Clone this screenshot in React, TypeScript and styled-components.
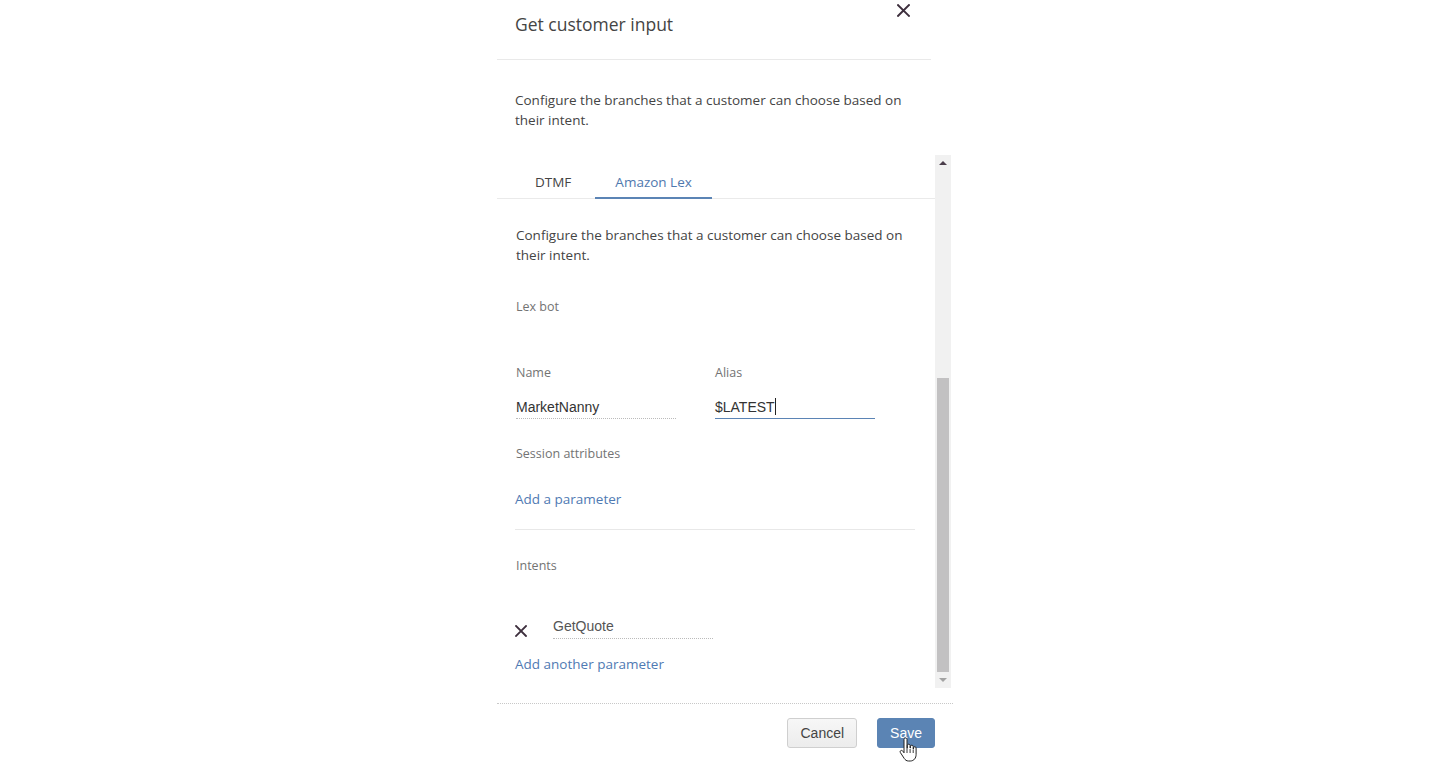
import React from "react";
import styled, { createGlobalStyle } from "styled-components";

const Global = createGlobalStyle`
  html, body { margin: 0; padding: 0; background: #fff; }
  body { font-family: "Open Sans", "Noto Sans", sans-serif; color: #444; }
  * { box-sizing: border-box; }
`;

const Page = styled.div`
  width: 1450px;
  height: 766px;
  display: flex;
  justify-content: center;
  overflow: hidden;
`;

const Dialog = styled.div`
  width: 456px;
  display: flex;
  flex-direction: column;
`;

const Header = styled.div`
  height: 60px;
  margin-right: 22px;
  padding: 12px 20px 0 18px;
  border-bottom: 1px solid #e9e9e9;
  display: flex;
  justify-content: space-between;
  align-items: flex-start;
`;

const Title = styled.h1`
  margin: 0;
  font-size: 17.5px;
  font-weight: 400;
  color: #444;
  line-height: 24px;
`;

const CloseBtn = styled.button`
  border: 0;
  background: none;
  padding: 0;
  margin-top: -8px;
  width: 14px;
  height: 14px;
  display: flex;
  color: #3d2f3d;
`;

const Para = styled.p<{ $indent?: number }>`
  margin: 0;
  padding-left: ${(p) => p.$indent ?? 18}px;
  font-size: 13.5px;
  line-height: 20px;
  color: #444;
`;

const Intro = styled.div`
  padding-top: 30px;
  height: 95px;
`;

const ScrollArea = styled.div`
  height: 533px;
  width: 456px;
  display: flex;
`;

const ScrollContent = styled.div`
  flex: 1;
  display: flex;
  flex-direction: column;
`;

const TabBar = styled.div`
  height: 44px;
  display: flex;
  align-items: stretch;
  padding-left: 18px;
  gap: 4px;
  border-bottom: 1px solid #eaeaea;
`;

const Tab = styled.div<{ $active?: boolean }>`
  padding: 12px 20px 0;
  display: flex;
  align-items: center;
  font-size: 13.5px;
  color: ${(p) => (p.$active ? "#4f78ae" : "#444")};
  border-bottom: 2px solid ${(p) => (p.$active ? "#5b84b5" : "transparent")};
  margin-bottom: -1px;
`;

const Body = styled.div`
  padding: 26px 20px 0 19px;
  display: flex;
  flex-direction: column;
`;

const Label = styled.div<{ $mt: number }>`
  margin-top: ${(p) => p.$mt}px;
  font-size: 12.5px;
  line-height: 18px;
  color: #737373;
`;

const FieldRow = styled.div`
  display: flex;
  gap: 39px;
  margin-top: 48px;
`;

const Field = styled.div`
  width: 160px;
  display: flex;
  flex-direction: column;
`;

const Input = styled.div<{ $focus?: boolean }>`
  margin-top: 14px;
  height: 23px;
  font-family: "Liberation Sans", Arial, sans-serif;
  font-size: 14px;
  line-height: 22px;
  color: #333;
  border-bottom: 1px ${(p) => (p.$focus ? "solid #5b84b5" : "dotted #bbb")};
`;

const Caret = styled.span`
  display: inline-block;
  width: 1px;
  height: 17px;
  background: #222;
  vertical-align: -3px;
`;

const Link = styled.a<{ $mt: number }>`
  margin-top: ${(p) => p.$mt}px;
  margin-left: -1px;
  font-size: 13.5px;
  line-height: 20px;
  color: #4f7ab3;
  text-decoration: none;
  cursor: pointer;
  align-self: flex-start;
`;

const Divider = styled.hr`
  margin: 20px 0 0 -1px;
  width: 400px;
  border: 0;
  border-top: 1px solid #e8e8e8;
`;

const IntentRow = styled.div`
  display: flex;
  align-items: flex-end;
  margin-top: 40px;
  margin-left: -1px;
  gap: 26px;
`;

const RemoveBtn = styled.button`
  border: 0;
  background: none;
  padding: 0;
  width: 12px;
  height: 12px;
  display: flex;
  color: #3d2f3d;
  margin-bottom: 2px;
`;

const IntentInput = styled(Input)`
  margin-top: 0;
  width: 160px;
  height: 24px;
  color: #555;
`;

const Scrollbar = styled.div`
  width: 17px;
  margin-right: 2px;
  background: #f1f1f1;
  display: flex;
  flex-direction: column;
  align-items: center;
`;

const ScrollArrow = styled.div<{ $down?: boolean }>`
  height: 16px;
  display: flex;
  align-items: center;
  justify-content: center;
  &::after {
    content: "";
    border-left: 4px solid transparent;
    border-right: 4px solid transparent;
    ${(p) =>
      p.$down
        ? "border-top: 4px solid #a3a3a3;"
        : "border-bottom: 4px solid #4a3d4a;"}
  }
`;

const Track = styled.div`
  flex: 1;
  width: 100%;
  display: flex;
  flex-direction: column;
  justify-content: flex-end;
  padding: 0 2px;
`;

const Thumb = styled.div`
  height: 294px;
  background: #c2c1c2;
`;

const Footer = styled.div`
  margin-top: 15px;
  border-top: 1px dotted #c8c8c8;
  padding: 14px 18px 0 0;
  display: flex;
  justify-content: flex-end;
  gap: 20px;
`;

const Button = styled.button<{ $primary?: boolean }>`
  position: relative;
  height: 30px;
  padding: 0 12px;
  border-radius: 3px;
  font-family: "Liberation Sans", Arial, sans-serif;
  font-size: 14px;
  color: ${(p) => (p.$primary ? "#fff" : "#444")};
  background: ${(p) => (p.$primary ? "#5b84b4" : "linear-gradient(#f7f7f7, #ececec)")};
  border: 1px solid ${(p) => (p.$primary ? "#5b84b4" : "#cfcfcf")};
`;

const Cursor = styled.svg`
  position: absolute;
  left: 21px;
  top: 18px;
`;

const XIcon = ({ size }: { size: number }) => (
  <svg width={size} height={size} viewBox="0 0 12 12">
    <path d="M1 1 L11 11 M11 1 L1 11" stroke="currentColor" strokeWidth="1.8" strokeLinecap="square" />
  </svg>
);

export default function App() {
  return (
    <Page>
      <Global />
      <Dialog>
        <Header>
          <Title>Get customer input</Title>
          <CloseBtn aria-label="Close">
            <XIcon size={13} />
          </CloseBtn>
        </Header>
        <Intro>
          <Para>
            Configure the branches that a customer can choose based on
            <br />
            their intent.
          </Para>
        </Intro>
        <ScrollArea>
          <ScrollContent>
            <TabBar>
              <Tab>DTMF</Tab>
              <Tab $active>Amazon Lex</Tab>
            </TabBar>
            <Body>
              <Para $indent={0}>
                Configure the branches that a customer can choose based on
                <br />
                their intent.
              </Para>
              <Label $mt={33}>Lex bot</Label>
              <FieldRow>
                <Field>
                  <Label $mt={0}>Name</Label>
                  <Input>MarketNanny</Input>
                </Field>
                <Field>
                  <Label $mt={0}>Alias</Label>
                  <Input $focus>
                    $LATEST
                    <Caret />
                  </Input>
                </Field>
              </FieldRow>
              <Label $mt={26}>Session attributes</Label>
              <Link $mt={26}>Add a parameter</Link>
              <Divider />
              <Label $mt={27}>Intents</Label>
              <IntentRow>
                <RemoveBtn aria-label="Remove">
                  <XIcon size={12} />
                </RemoveBtn>
                <IntentInput>GetQuote</IntentInput>
              </IntentRow>
              <Link $mt={15}>Add another parameter</Link>
            </Body>
          </ScrollContent>
          <Scrollbar>
            <ScrollArrow />
            <Track>
              <Thumb />
            </Track>
            <ScrollArrow $down />
          </Scrollbar>
        </ScrollArea>
        <Footer>
          <Button>Cancel</Button>
          <Button $primary>
            Save
            <Cursor width="20" height="26" viewBox="0 0 20 26">
              <path
                d="M5 2.5c0-1 .7-1.5 1.5-1.5S8 1.5 8 2.5V11h.3V8.6c0-.9.6-1.4 1.4-1.4s1.4.5 1.4 1.4V11h.3V9.6c0-.9.6-1.4 1.4-1.4s1.4.5 1.4 1.4V12h.3v-1c0-.8.6-1.3 1.3-1.3s1.3.5 1.3 1.3v6.5c0 3.3-2 6.5-5.8 6.5H9.5c-2 0-3.2-1-4.3-2.6L1.4 15.6c-.5-.8-.3-1.6.4-2s1.5-.2 2 .5L5 15.8V2.5z"
                fill="#fff"
                stroke="#222"
                strokeWidth="1"
                strokeLinejoin="round"
              />
              <path d="M8 11v5M11.1 12v4M14.2 12.5v3.5" stroke="#222" strokeWidth="0.9" />
            </Cursor>
          </Button>
        </Footer>
      </Dialog>
    </Page>
  );
}
